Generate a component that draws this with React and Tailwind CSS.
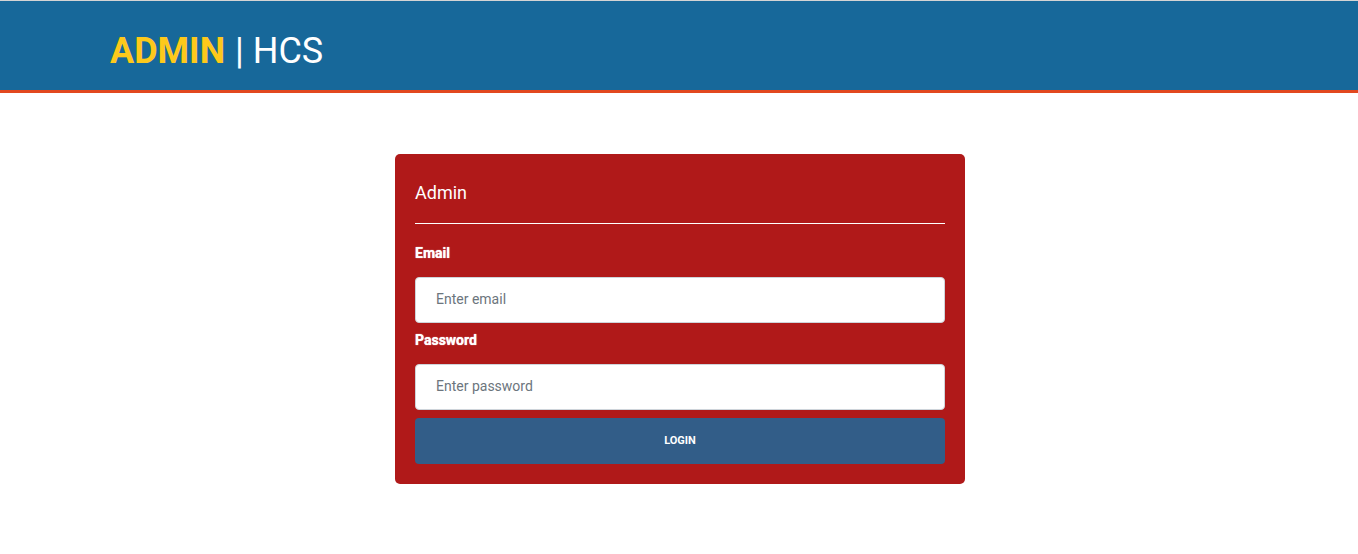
import { useState } from 'react';

const Header = () => {
  return (
    <header className="border-t border-[#d4d4d4] bg-[#17689a] border-b-[3px] border-b-[#e2481f]">
      <div className="h-[89px] flex items-center pt-[10px] pl-[110px]">
        <span className="text-[36px] font-bold text-[#fdc91b] leading-none">ADMIN</span>
        <span className="text-[36px] text-white leading-none ml-[10px]">| HCS</span>
      </div>
    </header>
  );
};

const LoginCard = () => {
  const [email, setEmail] = useState('');
  const [password, setPassword] = useState('');

  return (
    <div className="w-[570px] mx-auto mt-[61px] bg-[#b01919] rounded-[5px] px-[20px] pt-[28px] pb-[20px]">
      <h2 className="text-[18px] leading-[22px] text-white">Admin</h2>
      <div className="mt-[19px] h-px bg-white" />
      <form
        className="flex flex-col"
        onSubmit={(e) => {
          e.preventDefault();
        }}
      >
        <label className="mt-[20px] mb-[15px] text-[14px] leading-[18px] font-bold text-white [text-shadow:0_0_1px_#fff]">
          Email
        </label>
        <input
          type="email"
          value={email}
          onChange={(e) => setEmail(e.target.value)}
          placeholder="Enter email"
          className="h-[46px] rounded-[4px] border border-[#ced4da] bg-white px-[20px] pb-[3px] text-[14px] text-[#495057] placeholder:text-[#6c757d] outline-none"
        />
        <label className="mt-[8px] mb-[15px] text-[14px] leading-[18px] font-bold text-white [text-shadow:0_0_1px_#fff]">
          Password
        </label>
        <input
          type="password"
          value={password}
          onChange={(e) => setPassword(e.target.value)}
          placeholder="Enter password"
          className="h-[46px] rounded-[4px] border border-[#ced4da] bg-white px-[20px] pb-[3px] text-[14px] text-[#495057] placeholder:text-[#6c757d] outline-none"
        />
        <button
          type="submit"
          className="mt-[8px] h-[46px] rounded-[4px] bg-[#325d88] text-white text-[11px] font-bold uppercase"
        >
          Login
        </button>
      </form>
    </div>
  );
};

const App = () => {
  return (
    <div className="min-h-[554px] bg-white font-['Roboto',sans-serif]">
      <Header />
      <div className="pl-[2px]">
        <LoginCard />
      </div>
    </div>
  );
};

export default App;
